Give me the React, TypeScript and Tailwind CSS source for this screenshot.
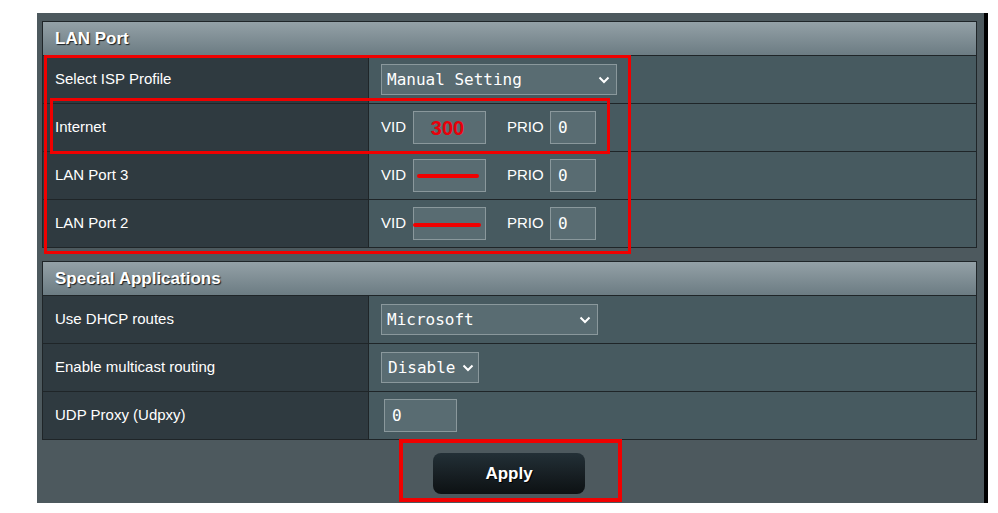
import React from 'react';

const sans = { fontFamily: '"Liberation Sans", Arial, sans-serif' };
const mono = { fontFamily: '"DejaVu Sans Mono", "Liberation Mono", monospace' };

function Chevron() {
    return (
        <svg width="12" height="8" viewBox="0 0 12 8" className="shrink-0">
            <path d="M1.5 1.5 L6 6 L10.5 1.5" fill="none" stroke="#ffffff" strokeWidth="2" />
        </svg>
    );
}

function SelectBox({ value, className }: { value: string; className: string }) {
    return (
        <div
            className={`flex items-center justify-between h-[31px] bg-[#596c72] border border-[#8a989c] pl-[5px] pr-[6px] text-[16px] text-white ${className}`}
            style={mono}
        >
            <span>{value}</span>
            <Chevron />
        </div>
    );
}

function Field({ value, className, children }: { value?: string; className: string; children?: React.ReactNode }) {
    return (
        <div
            className={`relative flex items-center h-[33px] bg-[#596c72] border border-[#8a989c] pl-[7px] text-[16px] text-white ${className}`}
            style={mono}
        >
            {value}
            {children}
        </div>
    );
}

function Row({ label, children }: { label: string; children: React.ReactNode }) {
    return (
        <div className="flex h-[48px] border-b border-[#1f2528]">
            <div className="w-[326px] shrink-0 flex items-center pl-[12px] bg-[#2f3a40] border-r border-[#1f2528] text-[15px] text-white">
                {label}
            </div>
            <div className="flex-1 flex items-center pl-[12px] bg-[#475a60] text-[15px] text-white">
                {children}
            </div>
        </div>
    );
}

function VlanRow({ label, vid, strike }: { label: string; vid?: React.ReactNode; strike?: string }) {
    return (
        <Row label={label}>
            <span className="w-[32px]">VID</span>
            <Field className="w-[73px] justify-center !pl-0">
                {vid}
                {strike && <span className={`absolute h-[4px] rounded-full bg-[#f00000] ${strike}`} />}
            </Field>
            <span className="ml-[21px] w-[43px]">PRIO</span>
            <Field value="0" className="w-[46px]" />
        </Row>
    );
}

function Header({ title }: { title: string }) {
    return (
        <div className="h-[34px] flex items-center pl-[12px] border-b border-[#1f2528] bg-gradient-to-b from-[#94a1a7] to-[#6c7c83] text-[17px] font-bold text-white [text-shadow:1px_1px_1px_#1a1f22]">
            {title}
        </div>
    );
}

export default function App() {
    return (
        <div className="relative w-[998px] h-[513px] bg-white overflow-hidden" style={sans}>
            <div className="ml-[37px] mt-[13px] w-[951px] h-[490px] bg-[#4d595e] border-r-[4px] border-black pt-[8px] pl-[5px] pr-[7px]">
                {/* LAN Port */}
                <div className="border-t border-x border-[#1f2528]">
                    <Header title="LAN Port" />
                    <Row label="Select ISP Profile">
                        <SelectBox value="Manual Setting" className="w-[236px]" />
                    </Row>
                    <VlanRow
                        label="Internet"
                        vid={<span className="text-[20px] font-bold text-[#e8000b] mr-[4px]" style={sans}>300</span>}
                    />
                    <VlanRow label="LAN Port 3" strike="left-[3px] top-[14px] w-[62px]" />
                    <VlanRow label="LAN Port 2" strike="left-[-1px] top-[15px] w-[68px]" />
                </div>

                {/* Special Applications */}
                <div className="mt-[13px] border-t border-x border-[#1f2528]">
                    <Header title="Special Applications" />
                    <Row label="Use DHCP routes">
                        <SelectBox value="Microsoft" className="w-[217px]" />
                    </Row>
                    <Row label="Enable multicast routing">
                        <SelectBox value="Disable" className="w-[98px] !pl-[6px] !pr-[4px]" />
                    </Row>
                    <Row label="UDP Proxy (Udpxy)">
                        <Field value="0" className="ml-[3px] w-[73px]" />
                    </Row>
                </div>

                <div className="flex justify-center mt-[13px] pr-[1px]">
                    <button className="w-[152px] h-[41px] rounded-[8px] bg-gradient-to-b from-[#233037] to-[#0d1113] text-[17px] font-bold text-white [text-shadow:1px_1px_0_#000]">
                        Apply
                    </button>
                </div>
            </div>

            {/* annotation boxes */}
            <div className="absolute left-[44px] top-[55px] w-[587px] h-[199px] border-[3px] border-[#f00000]" />
            <div className="absolute left-[50px] top-[98px] w-[560px] h-[56px] border-[3px] border-[#f00000]" />
            <div className="absolute left-[399px] top-[439px] w-[223px] h-[63px] border-[4px] border-[#f00000]" />
        </div>
    );
}
